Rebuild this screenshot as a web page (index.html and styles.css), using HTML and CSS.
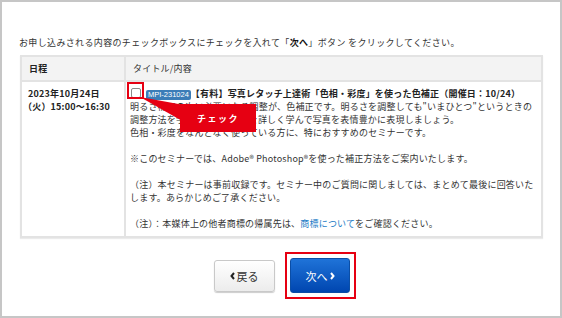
FILE: index.html
```html
<!DOCTYPE html>
<html lang="ja">
<head>
    <meta charset="UTF-8">
    <meta name="viewport" content="width=device-width, initial-scale=1.0">
    <title>セミナー申し込み</title>
    <link rel="stylesheet" href="styles.css">
</head>
<body>
    <div class="frame">
        <p class="lead">お申し込みされる内容のチェックボックスにチェックを入れて「<b>次へ</b>」ボタン をクリックしてください。</p>
        <table class="seminars">
            <thead>
                <tr>
                    <th class="col-date">日程</th>
                    <th class="col-title">タイトル/内容</th>
                </tr>
            </thead>
            <tbody>
                <tr>
                    <td class="date"><b class="day">2023年10月24日</b><b class="time">（火）15:00〜16:30</b></td>
                    <td class="detail">
                        <p><input type="checkbox" class="pick" name="seminar[]" value="MPI-231024"><span class="code">MPI-231024</span><b class="title">【有料】写真レタッチ上達術「色相・彩度」を使った色補正（開催日：10/24）</b><br>
                        明るさ補正の次に必要になる調整が、色補正です。明るさを調整しても"いまひとつ"というときの調整方法を学びます。色補正を詳しく学んで写真を表情豊かに表現しましょう。<br>
                        色相・彩度をなんとなく使っている方に、特におすすめのセミナーです。</p>
                        <p>※このセミナーでは、Adobe® Photoshop®を使った補正方法をご案内いたします。</p>
                        <p>（注）本セミナーは事前収録です。セミナー中のご質問に関しましては、まとめて最後に回答いたします。あらかじめご了承ください。</p>
                        <p>（注）：本媒体上の他者商標の帰属先は、<a href="#">商標について</a>をご確認ください。</p>
                    </td>
                </tr>
            </tbody>
        </table>
        <div class="actions">
            <button type="button" class="btn btn-back"><svg width="5" height="8" viewBox="0 0 5 8"><polyline points="4,1 1.5,4 4,7" fill="none" stroke="#222" stroke-width="2"/></svg>戻る</button>
            <div class="highlight">
                <button type="submit" class="btn btn-next">次へ<svg width="5" height="8" viewBox="0 0 5 8"><polyline points="1,1 3.5,4 1,7" fill="none" stroke="#fff" stroke-width="2"/></svg></button>
            </div>
        </div>

        <!-- tutorial callout over the checkbox -->
        <div class="check-ring"></div>
        <svg class="callout-arrow" width="44" height="28" viewBox="0 0 44 28"><polygon points="0,0 44,8 44,25" fill="#e60012"/></svg>
        <div class="callout-label">チェック</div>
    </div>
</body>
</html>
```

FILE: styles.css
```css
* {
    box-sizing: border-box;
}
body {
    margin: 0;
    font-family: "Noto Sans CJK JP", "Noto Sans", sans-serif;
    font-size: 9px;
    line-height: 13px;
    letter-spacing: 0.2px;
    color: #333;
    background: #fff;
}
.frame {
    position: relative;
    width: 562px;
    height: 318px;
    border: 2px solid #c6c6c6;
    padding: 34px 17px 0 18px;
}
.lead {
    margin: 0 0 6px -1px;
    letter-spacing: 0.35px;
}
.lead b {
    color: #111;
}
.seminars {
    width: 100%;
    table-layout: fixed;
    border-collapse: collapse;
    border: 2px solid #e3e3e3;
    box-shadow: 0 1px 1px rgba(0,0,0,0.08);
}
.seminars th,
.seminars td {
    border: 2px solid #e3e3e3;
    text-align: left;
    vertical-align: top;
}
.seminars th {
    background: #f3f3f3;
    padding: 5px 7px 3px 7px;
    height: 25px;
}
.col-date {
    width: 104px;
    color: #222;
}
.col-title {
    font-weight: normal;
}
.date {
    padding: 5px 4px 6px 6px;
    color: #222;
}
.date b {
    display: block;
}
.date .time {
    margin-left: -5px;
}
.detail {
    padding: 5px 4px 6px 4px;
}
.detail p {
    margin: 0 0 13px 0;
}
.detail p:last-child {
    margin-bottom: 0;
}
.pick {
    appearance: none;
    -webkit-appearance: none;
    width: 10px;
    height: 10px;
    margin: 0 5px 0 1px;
    border: 1px solid #8a8a8a;
    border-radius: 2px;
    background: #fff;
    vertical-align: -1px;
}
.code {
    display: inline-block;
    font-family: "Liberation Sans", Arial, sans-serif;
    font-size: 7.5px;
    line-height: 10px;
    letter-spacing: 0;
    padding: 0 2px;
    background: #3b7db8;
    color: #fff;
    border-radius: 2px;
    margin-right: 0;
}
.title {
    color: #222;
}
.detail a {
    color: #1d7cc6;
    text-decoration: none;
}
.actions {
    display: flex;
    justify-content: center;
    align-items: center;
    gap: 10px;
    margin-top: 14px;
    padding-left: 6px;
}
.btn {
    font-family: "Noto Sans CJK JP", sans-serif;
    font-size: 11px;
    letter-spacing: 0;
    border-radius: 3px;
    display: flex;
    align-items: center;
    justify-content: center;
    gap: 2px;
    cursor: pointer;
    padding: 0;
}
.btn-back {
    width: 61px;
    height: 32px;
    border: 1px solid #c9c9c9;
    background: linear-gradient(#ffffff, #ececec);
    box-shadow: 0 1px 1px rgba(0,0,0,0.2);
    color: #333;
}
.btn-next {
    width: 60px;
    height: 35px;
    border: 1px solid #0b4ea6;
    background: linear-gradient(#1f73d8, #0046b0);
    color: #fff;
}
.highlight {
    border: 2px solid #e60012;
    padding: 4px 3.5px;
}
.check-ring {
    position: absolute;
    left: 125px;
    top: 80px;
    width: 17px;
    height: 17px;
    border: 2px solid #e60012;
}
.callout-arrow {
    position: absolute;
    left: 138px;
    top: 95px;
}
.callout-label {
    position: absolute;
    left: 178px;
    top: 102px;
    width: 76px;
    height: 28px;
    background: #e60012;
    color: #fff;
    font-weight: bold;
    letter-spacing: 1.5px;
    display: flex;
    align-items: center;
    justify-content: center;
}
```
